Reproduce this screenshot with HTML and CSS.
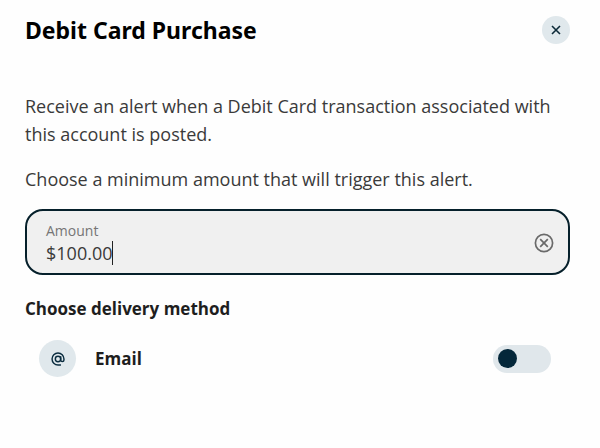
FILE: index.html
```
<!DOCTYPE html>
<html lang="en">
<head>
<meta charset="utf-8">
<meta name="viewport" content="width=device-width, initial-scale=1">
<title>Debit Card Purchase</title>
<link rel="stylesheet" href="styles.css">
</head>
<body>
<main class="dialog">
  <header class="header">
    <h1 class="title">Debit Card Purchase</h1>
    <button class="close" type="button" aria-label="Close">
      <svg width="10" height="10" viewBox="0 0 10 10"><path d="M1 1l8 8M9 1L1 9" fill="none" stroke="#0c2a38" stroke-width="1.6"/></svg>
    </button>
  </header>
  <p class="text">Receive an alert when a Debit Card transaction associated with this account is posted.</p>
  <p class="text">Choose a minimum amount that will trigger this alert.</p>
  <div class="field">
    <div class="field-body">
      <label class="field-label" for="amount">Amount</label>
      <div class="field-value">
        <input class="field-input" id="amount" type="text" value="$100.00">
      </div>
    </div>
    <button class="clear" type="button" aria-label="Clear amount">
      <svg width="20" height="20" viewBox="0 0 20 20" fill="none" stroke="#6a6a6a" stroke-width="1.7"><circle cx="10" cy="10" r="8.6"/><path d="M6.2 6.2l7.6 7.6M13.8 6.2l-7.6 7.6"/></svg>
    </button>
  </div>
  <h2 class="subtitle">Choose delivery method</h2>
  <div class="method">
    <span class="badge">
      <svg width="14" height="14" viewBox="0 0 24 24" fill="none" stroke="#0b2d40" stroke-width="2.5"><circle cx="12" cy="12" r="4.6"/><path d="M17 22.2h-5A10.2 10.2 0 1 1 22.2 12v1.6a2.8 2.8 0 0 1-5.6 0V7.2"/></svg>
    </span>
    <label class="method-name" for="email">Email</label>
    <input class="toggle" id="email" type="checkbox" role="switch">
  </div>
</main>
</body>
</html>
```
FILE: styles.css
```
* {
  box-sizing: border-box;
}

body {
  margin: 0;
  background: #fefefe;
  color: #3a3a3a;
  font: 18px/28px "Open Sans", "Noto Sans", sans-serif;
}

.dialog {
  padding: 16px 30px 24px 25px;
}

.header {
  display: flex;
  align-items: center;
  justify-content: space-between;
  margin-bottom: 48px;
}

.title {
  margin: 0;
  color: #000;
  font-family: "Noto Sans", "Open Sans", sans-serif;
  font-size: 23px;
  font-weight: 700;
  line-height: 28px;
}

.close,
.clear {
  display: grid;
  place-items: center;
  padding: 0;
  border: 0;
  background: none;
}

.close {
  width: 28px;
  height: 28px;
  border-radius: 50%;
  background: #e0e8ec;
}

.text {
  margin: 17px 0 16px;
}

.field {
  display: flex;
  align-items: center;
  justify-content: space-between;
  padding: 10px 14px 8px 19px;
  border: 2px solid #06202b;
  border-radius: 18px;
  background: #f0f0f0;
}

.field-label {
  display: block;
  color: #757575;
  font-size: 14px;
  line-height: 20px;
}

.field-value {
  display: flex;
  align-items: center;
}

.field-value::after {
  width: 1px;
  height: 24px;
  background: #222;
  content: "";
}

.field-input {
  field-sizing: content;
  height: 24px;
  padding: 0;
  border: 0;
  outline: 0;
  background: none;
  color: #3a3a3a;
  font: inherit;
}

.subtitle {
  margin: 20px 0 17px;
  color: #1e1e1e;
  font-size: 17px;
  font-weight: 700;
  line-height: 28px;
}

.method {
  display: flex;
  align-items: center;
  padding: 0 19px 0 14px;
}

.badge {
  display: grid;
  place-items: center;
  width: 37px;
  height: 37px;
  margin-right: 19px;
  border-radius: 50%;
  background: #e0e8ec;
}

.method-name {
  flex: 1;
  color: #1e1e1e;
  font-size: 17px;
  font-weight: 700;
}

.toggle {
  display: flex;
  align-items: center;
  width: 58px;
  height: 28px;
  margin: 0;
  padding: 0 5px;
  border-radius: 14px;
  background: #e0e7eb;
  appearance: none;
}

.toggle::before {
  width: 19px;
  height: 19px;
  border-radius: 50%;
  background: #04273a;
  content: "";
}

.toggle:checked {
  justify-content: flex-end;
}
```
